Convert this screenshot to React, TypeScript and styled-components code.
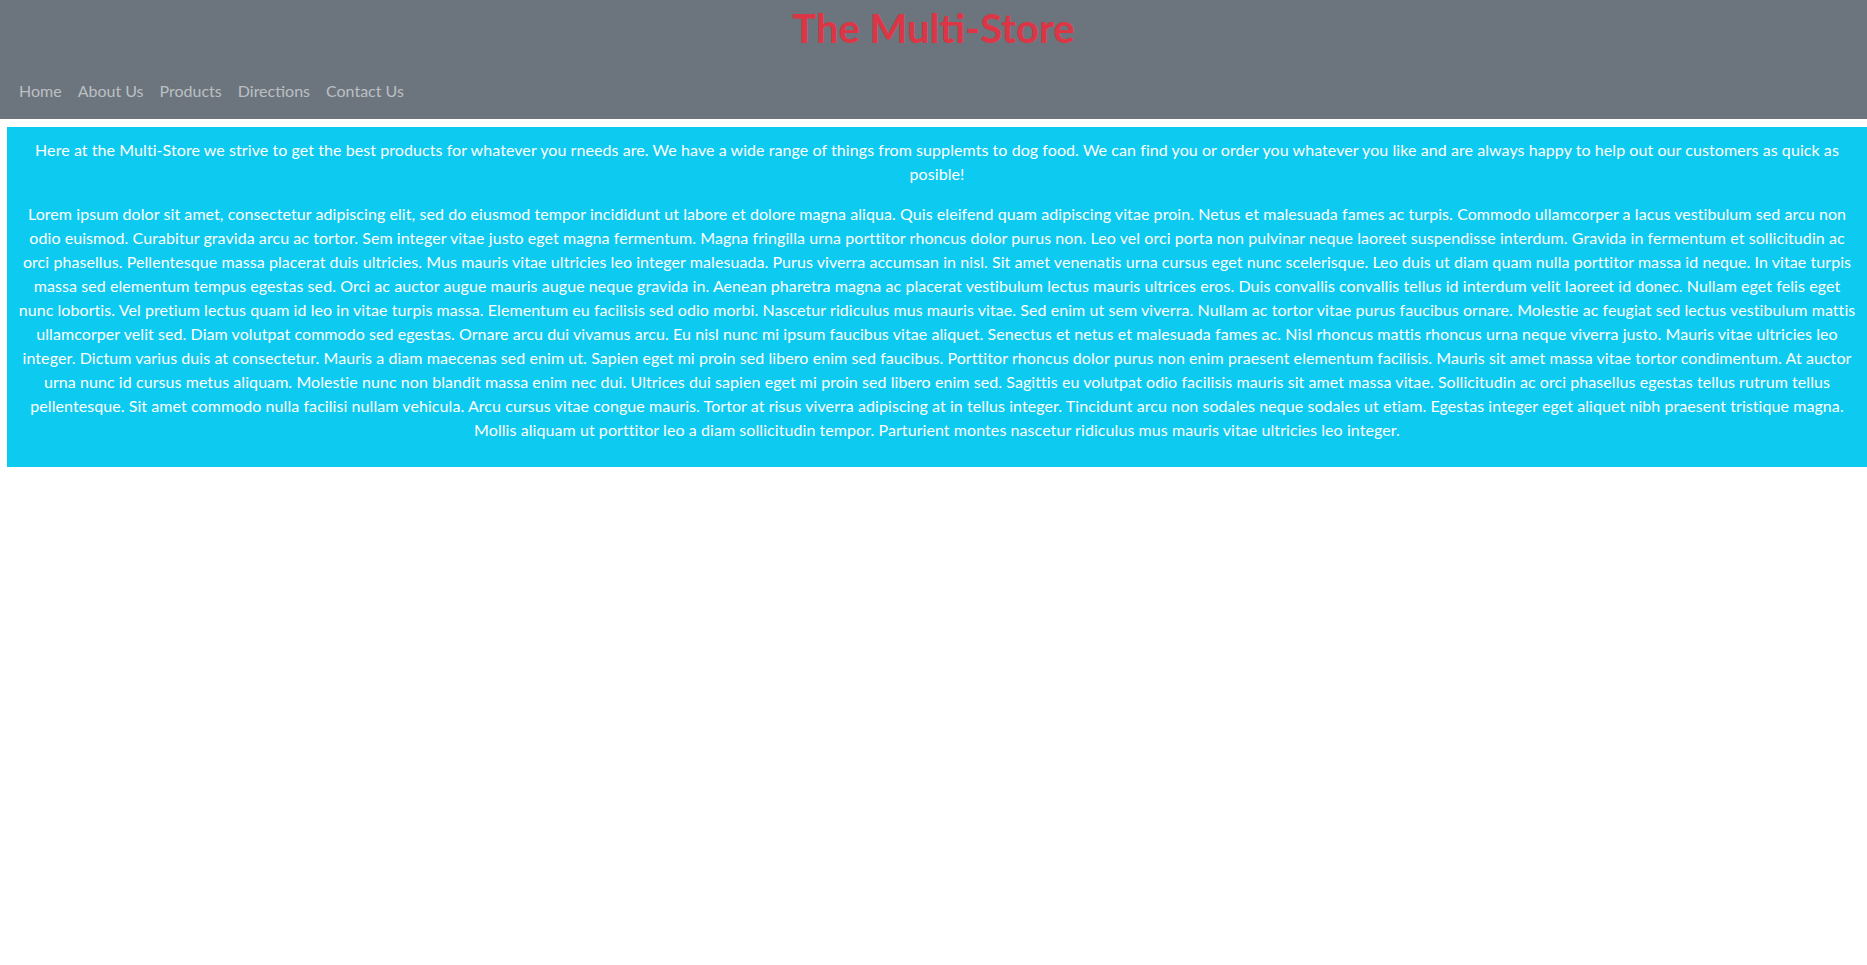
import React from 'react';
import styled, {createGlobalStyle} from 'styled-components';

const GlobalStyle = createGlobalStyle`
	body {
		margin: 0;
		font-family: Lato, "Noto Sans", sans-serif;
		font-size: 16px;
		line-height: 1.5;
		background: #fff;
	}
`;
const Header = styled.header`
	display: flex;
	flex-direction: column;
	background-color: #6c757d;
	height: 119px;
	box-sizing: border-box;
`;
const Title = styled.h1`
	margin: 0;
	padding-top: 4px;
	text-align: center;
	font-size: 40px;
	line-height: 48px;
	font-weight: 700;
	color: #dc3545;
`;
const Nav = styled.nav`
	display: flex;
	padding: 27px 11px 16px;
`;
const NavLink = styled.a`
	padding: 0 8px;
	line-height: 24px;
	color: rgba(255, 255, 255, 0.55);
	text-decoration: none;
	cursor: pointer;
`;
const Info = styled.section`
	margin: 8px 0 0 7px;
	padding: 11px 11px 9px;
	background-color: #0dcaf0;
	color: #fff;
	text-align: center;
	letter-spacing: 0.07px;
`;
const Para = styled.p`
	margin: 0 0 16px;
`;

const links = ['Home', 'About Us', 'Products', 'Directions', 'Contact Us'];

const intro =
	'Here at the Multi-Store we strive to get the best products for whatever you rneeds are. We have a wide range of things from supplemts to dog food. We can find you or order you whatever you like and are always happy to help out our customers as quick as posible!';

const lorem =
	'Lorem ipsum dolor sit amet, consectetur adipiscing elit, sed do eiusmod tempor incididunt ut labore et dolore magna aliqua. Quis eleifend quam adipiscing vitae proin. Netus et malesuada fames ac turpis. Commodo ullamcorper a lacus vestibulum sed arcu non odio euismod. Curabitur gravida arcu ac tortor. Sem integer vitae justo eget magna fermentum. Magna fringilla urna porttitor rhoncus dolor purus non. Leo vel orci porta non pulvinar neque laoreet suspendisse interdum. Gravida in fermentum et sollicitudin ac orci phasellus. Pellentesque massa placerat duis ultricies. Mus mauris vitae ultricies leo integer malesuada. Purus viverra accumsan in nisl. Sit amet venenatis urna cursus eget nunc scelerisque. Leo duis ut diam quam nulla porttitor massa id neque. In vitae turpis massa sed elementum tempus egestas sed. Orci ac auctor augue mauris augue neque gravida in. Aenean pharetra magna ac placerat vestibulum lectus mauris ultrices eros. Duis convallis convallis tellus id interdum velit laoreet id donec. Nullam eget felis eget nunc lobortis. Vel pretium lectus quam id leo in vitae turpis massa. Elementum eu facilisis sed odio morbi. Nascetur ridiculus mus mauris vitae. Sed enim ut sem viverra. Nullam ac tortor vitae purus faucibus ornare. Molestie ac feugiat sed lectus vestibulum mattis ullamcorper velit sed. Diam volutpat commodo sed egestas. Ornare arcu dui vivamus arcu. Eu nisl nunc mi ipsum faucibus vitae aliquet. Senectus et netus et malesuada fames ac. Nisl rhoncus mattis rhoncus urna neque viverra justo. Mauris vitae ultricies leo integer. Dictum varius duis at consectetur. Mauris a diam maecenas sed enim ut. Sapien eget mi proin sed libero enim sed faucibus. Porttitor rhoncus dolor purus non enim praesent elementum facilisis. Mauris sit amet massa vitae tortor condimentum. At auctor urna nunc id cursus metus aliquam. Molestie nunc non blandit massa enim nec dui. Ultrices dui sapien eget mi proin sed libero enim sed. Sagittis eu volutpat odio facilisis mauris sit amet massa vitae. Sollicitudin ac orci phasellus egestas tellus rutrum tellus pellentesque. Sit amet commodo nulla facilisi nullam vehicula. Arcu cursus vitae congue mauris. Tortor at risus viverra adipiscing at in tellus integer. Tincidunt arcu non sodales neque sodales ut etiam. Egestas integer eget aliquet nibh praesent tristique magna. Mollis aliquam ut porttitor leo a diam sollicitudin tempor. Parturient montes nascetur ridiculus mus mauris vitae ultricies leo integer.';

function App() {
	return (
		<>
			<GlobalStyle />
			<Header>
				<Title>The Multi-Store</Title>
				<Nav>
					{links.map((l) => (
						<NavLink key={l}>{l}</NavLink>
					))}
				</Nav>
			</Header>
			<Info>
				<Para>{intro}</Para>
				<Para>{lorem}</Para>
			</Info>
		</>
	);
}

export default App;
